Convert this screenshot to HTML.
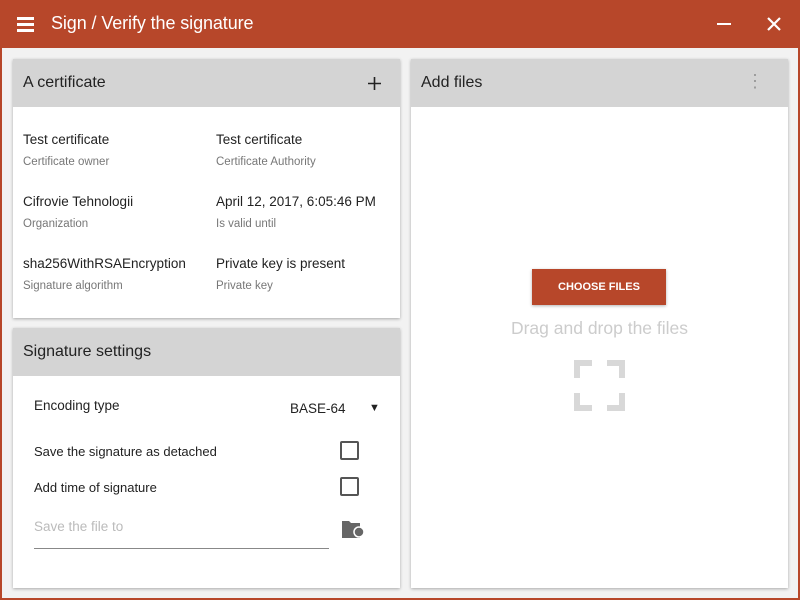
<!DOCTYPE html>
<html><head><style>
*{box-sizing:border-box;margin:0;padding:0}
body{width:800px;height:600px;overflow:hidden;background:#b7472a;font-family:"Liberation Sans",sans-serif;position:relative}
.main{position:absolute;left:2px;top:48px;width:796px;height:550px;background:#f2f2f2}
.top{position:absolute;left:0;top:0;width:800px;height:48px;background:#b7472a;color:#fff}
.card{position:absolute;background:#fff;box-shadow:0 1px 3px rgba(0,0,0,.3)}
.hd{height:48px;background:#d4d4d4;font-size:16px;color:#222;padding:15px 10px}
.v{position:absolute;font-size:13.5px;color:#222}
.l{position:absolute;font-size:11.5px;color:#777}
.cb{position:absolute;width:19px;height:19px;border:2px solid #555;border-radius:2px}
</style></head><body>
<div class="top">
<div style="position:absolute;left:17px;top:17px;width:17px;height:3px;background:#fff;box-shadow:0 6px 0 #fff,0 12px 0 #fff"></div>
<div style="position:absolute;left:51px;top:13px;font-size:18px;letter-spacing:-0.1px">Sign / Verify the signature</div>
<div style="position:absolute;left:717px;top:23px;width:14px;height:2px;background:#fff"></div>
<svg style="position:absolute;left:767px;top:17px" width="14" height="14"><path d="M1 1L13 13M13 1L1 13" stroke="#fff" stroke-width="2.2"/></svg>
</div>
<div class="main"></div>
<div class="card" style="left:13px;top:59px;width:387px;height:259px">
<div class="hd">A certificate<svg style="float:right;margin-top:3px;margin-right:9px" width="13" height="13"><path d="M6.5 0V13M0 6.5H13" stroke="#222" stroke-width="1.6"/></svg></div>
<div class="v" style="left:10px;top:73px">Test certificate</div><div class="l" style="left:10px;top:97px">Certificate owner</div>
<div class="v" style="left:203px;top:73px">Test certificate</div><div class="l" style="left:203px;top:97px">Certificate Authority</div>
<div class="v" style="left:10px;top:135px">Cifrovie Tehnologii</div><div class="l" style="left:10px;top:159px">Organization</div>
<div class="v" style="left:203px;top:135px">April 12, 2017, 6:05:46 PM</div><div class="l" style="left:203px;top:159px">Is valid until</div>
<div class="v" style="left:10px;top:197px">sha256WithRSAEncryption</div><div class="l" style="left:10px;top:221px">Signature algorithm</div>
<div class="v" style="left:203px;top:197px">Private key is present</div><div class="l" style="left:203px;top:221px">Private key</div>
</div>
<div class="card" style="left:13px;top:328px;width:387px;height:260px">
<div class="hd">Signature settings</div>
<div class="v" style="left:21px;top:70px">Encoding type</div>
<div class="v" style="left:277px;top:73px">BASE-64</div>
<div class="v" style="left:356px;top:74px;font-size:11px">▼</div>
<div class="v" style="left:21px;top:116px;font-size:13px">Save the signature as detached</div>
<div class="cb" style="left:327px;top:113px"></div>
<div class="v" style="left:21px;top:152px;font-size:13px">Add time of signature</div>
<div class="cb" style="left:327px;top:149px"></div>
<div class="v" style="left:21px;top:191px;color:#bbb">Save the file to</div>
<div style="position:absolute;left:21px;top:220px;width:295px;height:1px;background:#888"></div>
<svg style="position:absolute;left:328px;top:190px" width="25" height="22"><path d="M1 3h7l2 2h9v15H1z" fill="#666"/><circle cx="18" cy="14" r="5" fill="#666" stroke="#fff" stroke-width="1.5"/></svg>
</div>
<div class="card" style="left:411px;top:59px;width:377px;height:529px">
<div class="hd">Add files<span style="float:right;color:#999;font-size:18px;margin-top:-3px;margin-right:14px">⋮</span></div>
<div style="position:absolute;left:121px;top:210px;width:134px;height:36px;background:#b7472a;color:#fff;font-size:11px;font-weight:bold;text-align:center;line-height:36px;box-shadow:0 1px 3px rgba(0,0,0,.3)">CHOOSE FILES</div>
<div style="position:absolute;left:0;width:377px;top:259px;text-align:center;font-size:17.5px;color:#ccc">Drag and drop the files</div>
<svg style="position:absolute;left:163px;top:301px" width="51" height="51"><path d="M3 18V3h15M33 3h15v15M48 33v15H33M18 48H3V33" fill="none" stroke="#d8d8d8" stroke-width="6"/></svg>
</div>
</body></html>
